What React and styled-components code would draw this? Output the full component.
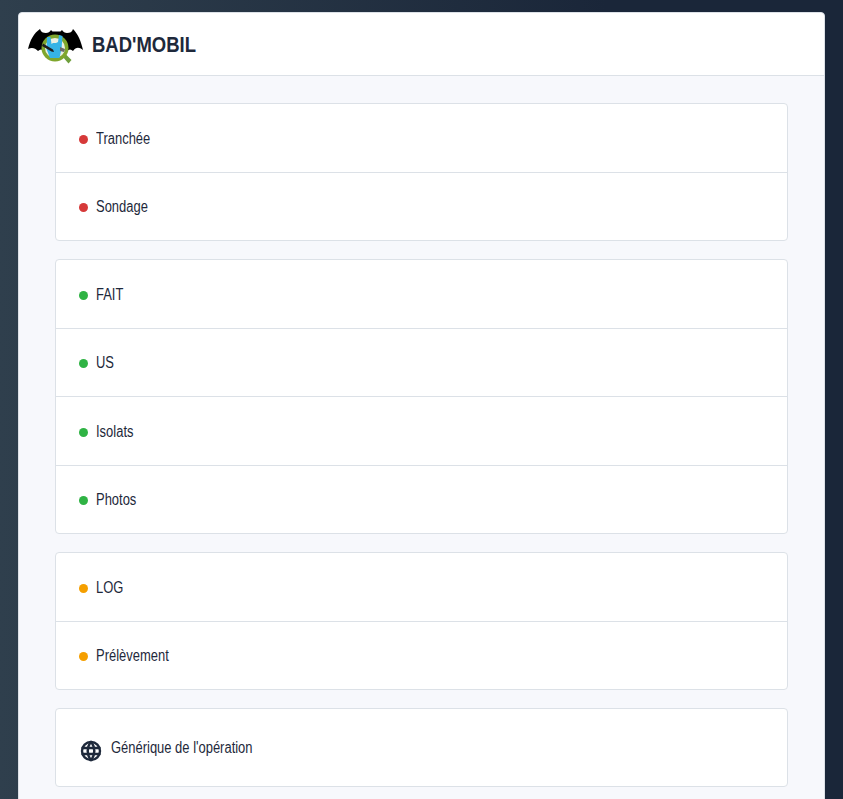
import React from "react";
import styled, { createGlobalStyle } from "styled-components";
import { TbWorld } from "react-icons/tb";

const groups = [
  { color: "#d63939", items: ["Tranchée", "Sondage"] },
  { color: "#2fb344", items: ["FAIT", "US", "Isolats", "Photos"] },
  { color: "#f59f00", items: ["LOG", "Prélèvement"] }
];

const GlobalStyle = createGlobalStyle`
  html, body {
    margin: 0;
    height: 799px;
    overflow: hidden;
  }
  body {
    font-family: "Liberation Sans", Arial, sans-serif;
    color: #1e293b;
  }
`;

const Page = styled.div`
  height: 799px;
  overflow: hidden;
  box-sizing: border-box;
  padding: 12px 18px 0;
  background: linear-gradient(90deg, #2f3f4d 0%, #1a2639 72%, #1a2639 100%);
`;

const Card = styled.div`
  background: #f7f8fc;
  border: 1px solid #dce1e7;
  border-radius: 4px;
  box-sizing: border-box;
  min-height: 900px;
`;

const Header = styled.header`
  height: 63px;
  box-sizing: border-box;
  background: #fff;
  border-bottom: 1px solid #dce1e7;
  border-radius: 4px 4px 0 0;
  display: flex;
  align-items: center;
  padding-left: 9px;
  gap: 8px;
`;

const Brand = styled.h1`
  margin: 2px 0 0;
  font-size: 22px;
  font-weight: 700;
  color: #1e293b;
  transform: scaleX(0.84);
  transform-origin: left center;
`;

const Body = styled.main`
  display: flex;
  flex-direction: column;
  gap: 18px;
  padding: 27px 36px;
`;

const ListGroup = styled.div`
  background: #fff;
  border: 1px solid #dce1e7;
  border-radius: 4px;
`;

const Row = styled.div`
  height: 67.5px;
  box-sizing: border-box;
  display: flex;
  align-items: center;
  padding: 3px 0 0 23px;
  gap: 8px;
  font-size: 16px;
  & + & {
    border-top: 1px solid #dce1e7;
    height: 68.5px;
  }
`;

const Dot = styled.span`
  width: 9px;
  height: 9px;
  border-radius: 50%;
  background: ${props => props.color};
`;

const IconRow = styled(Row)`
  height: 77px;
  padding-top: 1px;
`;

const Globe = styled(TbWorld)`
  margin-top: 6px;
  color: #1e293b;
  stroke-width: 2.4;
`;

const Label = styled.span`
  display: inline-block;
  margin-top: -1px;
  transform: scaleX(0.81);
  transform-origin: left center;
`;

function Logo() {
  return (
    <svg width="56" height="39" viewBox="0 0 56 39">
      <path
        d="M0 24 C2 15 6 8 12 4 C13 7 15 8 18 8 C20 8 22 7 23 5 L24.5 6.5 L32.5 6.5 L34 5 C35 7 37 8 39 8 C42 8 44 7 45 4 C50 9 53 16 55 25 C51 22 48 22 45 26 C43 24 41 24 39 26 L16 26 C14 24 12 24 10 26 C7 23 4 22 0 24 Z"
        fill="#000"
      />
      <path d="M34 31 L37 28.5 L43.5 35 L40.5 38.5 Z" fill="#6f9f3c" />
      <circle cx="27" cy="23" r="13.5" fill="#7fa62c" />
      <circle cx="27" cy="23" r="10" fill="#e9efe2" />
      <path
        d="M19 12 L22.5 12 L23.5 19 L25 18 L28 18 L30 17 L31 10 L34.5 11 L33.5 24 L31.5 33 L22 33 L18.5 24 Z"
        fill="#35b3e6"
      />
      <path d="M15 18.5 L25 24.5 L26 27 L23.5 26.5 L14 21 Z" fill="#1d1d1d" />
      <path d="M32 22 L37 24 L36 27 L32 26 Z" fill="#6a6a6a" />
    </svg>
  );
}

export default function App() {
  return (
    <>
      <GlobalStyle />
      <Page>
        <Card>
          <Header>
            <Logo />
            <Brand>BAD'MOBIL</Brand>
          </Header>
          <Body>
            {groups.map(group => (
              <ListGroup key={group.items[0]}>
                {group.items.map(item => (
                  <Row key={item}>
                    <Dot color={group.color} />
                    <Label>{item}</Label>
                  </Row>
                ))}
              </ListGroup>
            ))}
            <ListGroup>
              <IconRow>
                <Globe size={24} />
                <Label>Générique de l'opération</Label>
              </IconRow>
            </ListGroup>
          </Body>
        </Card>
      </Page>
    </>
  );
}
